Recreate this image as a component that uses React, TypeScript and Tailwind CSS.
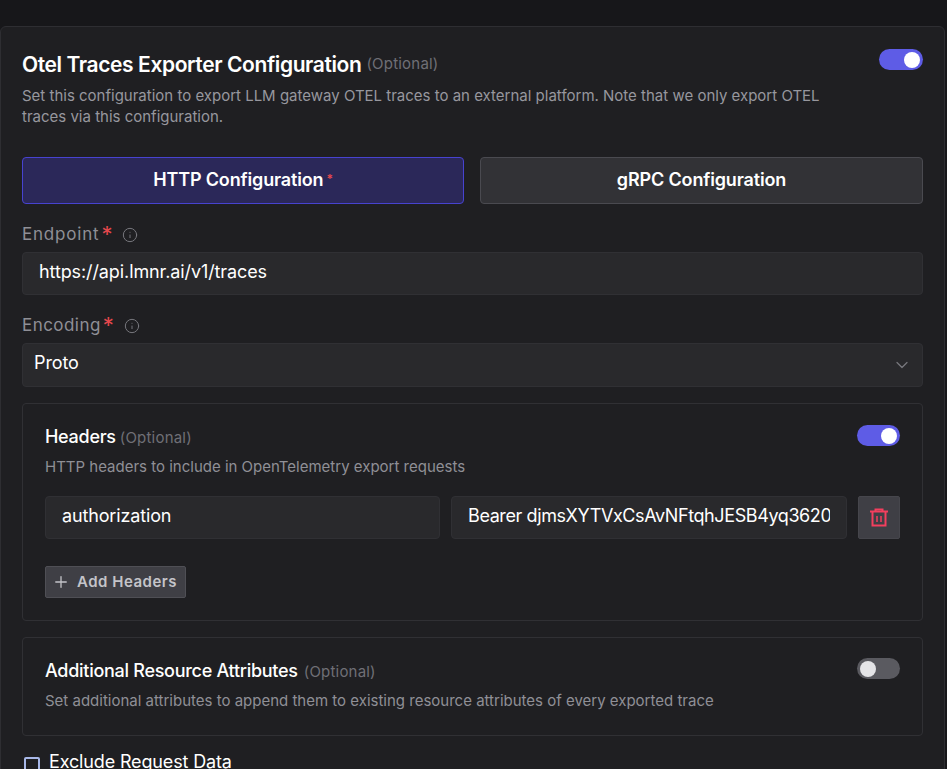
import { Plus, ChevronDown, Info } from 'lucide-react';

function Toggle({ on, wide }: { on: boolean; wide?: boolean }) {
  return (
    <div
      className={`flex h-[21px] shrink-0 items-center rounded-full px-[3px] ${wide ? 'w-[44px]' : 'w-[43px]'} ${
        on ? 'justify-end bg-[#5e5ce6]' : 'justify-start bg-[#5a5a60]'
      }`}
    >
      <div className={`h-[16px] w-[16px] rounded-full ${on ? 'bg-white' : 'bg-[#e4e4e7]'}`} />
    </div>
  );
}

function FieldLabel({ text, narrow }: { text: string; narrow?: boolean }) {
  return (
    <div className="flex h-[18px] items-center pt-[2px]">
      <span className={`text-[17px] text-[#8f8f96] ${narrow ? 'tracking-[0.45px]' : 'tracking-[0.8px]'}`}>{text}</span>
      <span className="-mt-[2px] ml-[2px] text-[22px] leading-[18px] text-[#e5484d]">*</span>
      <Info size={16} strokeWidth={1.5} className="ml-[10px] text-[#77777d]" />
    </div>
  );
}

function TrashIcon() {
  return (
    <svg width="20" height="20" viewBox="0 0 20 20" fill="none" stroke="#f43f5e" strokeWidth="2">
      <path d="M1 3.5h18" />
      <path d="M6.5 3V1.5h7V3" />
      <path d="M3.5 4v13.5h13V4" />
      <path d="M8 8v6M12 8v6" strokeWidth="1.5" />
    </svg>
  );
}

export default function App() {
  return (
    <div className="h-[769px] w-[947px] overflow-hidden bg-[#17171a] pt-[26px] font-['Inter',sans-serif]">
      <div className="mr-[2px] rounded-[6px] border border-[#2e2e32] bg-[#1f1f22] px-[21px] pt-[23px]">
        <div className="-mt-px flex items-start justify-between">
          <div className="w-[820px]">
            <div className="mt-px flex items-baseline">
              <h2 className="text-[21px] leading-[30px] font-semibold tracking-[-0.4px] text-white">
                Otel Traces Exporter Configuration
              </h2>
              <span className="ml-[5px] -translate-y-[3px] text-[15px] tracking-[0.2px] text-[#6f6f76]">(Optional)</span>
            </div>
            <p className="mt-[5px] text-[15px] leading-[21px] text-[#97979e]">
              Set this configuration to export LLM gateway OTEL traces to an external platform. Note that we only export
              OTEL
              <br />
              traces via this configuration.
            </p>
          </div>
          <Toggle on wide />
        </div>

        <div className="mt-[30px] grid grid-cols-[442px_443px] gap-[16px]">
          <button className="flex h-[47px] items-center justify-center rounded-[4px] border border-[#4743d0] bg-[#2b2859] pb-[2px] text-[18px] font-semibold tracking-[-0.15px] text-white">
            HTTP Configuration<span className="mb-[2px] ml-[3px] text-[12px] text-[#e5484d]">*</span>
          </button>
          <button className="flex h-[47px] items-center justify-center rounded-[4px] border border-[#4a4a50] bg-[#323236] pb-[2px] text-[18px] font-semibold tracking-[-0.15px] text-white">
            gRPC Configuration
          </button>
        </div>

        <div className="mt-[21px]">
          <FieldLabel text="Endpoint" />
          <div className="mt-[9px] flex h-[43px] items-center rounded-[4px] border border-[#303034] bg-[#29292c] px-[16px] pb-[4px] text-[18px] tracking-[-0.1px] text-white">
            https://api.lmnr.ai/v1/traces
          </div>
        </div>

        <div className="mt-[21px]">
          <FieldLabel text="Encoding" narrow />
          <div className="mt-[9px] flex h-[44px] items-center justify-between rounded-[4px] border border-[#303034] bg-[#29292c] pr-[10px] pl-[11px] text-[18px] tracking-[-0.1px] text-white">
            <span className="pb-[5px]">Proto</span>
            <ChevronDown size={20} strokeWidth={1.5} className="text-[#77777d]" />
          </div>
        </div>

        <section className="mt-[16px] h-[218px] rounded-[4px] border border-[#303034] px-[22px] pt-[20px]">
          <div className="flex items-start justify-between">
            <div className="flex items-baseline">
              <h3 className="text-[18px] leading-[26px] font-medium tracking-[-0.28px] text-white">Headers</h3>
              <span className="ml-[4px] text-[15px] tracking-[0.2px] text-[#6f6f76]">(Optional)</span>
            </div>
            <div className="mt-[1px]">
              <Toggle on />
            </div>
          </div>
          <p className="mt-[6px] text-[15px] leading-[21px] text-[#8f8f96]">
            HTTP headers to include in OpenTelemetry export requests
          </p>
          <div className="mt-[19px] flex gap-[11px]">
            <div className="flex h-[43px] w-[395px] items-center rounded-[4px] border border-[#303034] bg-[#29292c] px-[16px] pb-[4px] text-[18px] tracking-[-0.15px] text-white">
              authorization
            </div>
            <div className="flex h-[43px] w-[396px] items-center rounded-[4px] border border-[#303034] bg-[#29292c] px-[16px] pb-[4px] text-[18px] tracking-[-0.4px] text-white">
              <input
                readOnly
                value="Bearer djmsXYTVxCsAvNFtqhJESB4yq3620"
                className="w-full bg-transparent outline-none"
              />
            </div>
            <button className="flex h-[43px] w-[42px] items-center justify-center rounded-[2px] border border-[#46464c] bg-[#3f3f45]">
              <TrashIcon />
            </button>
          </div>
          <button className="mt-[27px] flex h-[32px] w-[141px] items-center justify-center gap-[7px] rounded-[2px] border border-[#4f4f55] bg-[#3f3f45] pr-[2px] text-[15px] font-semibold tracking-[0.5px] text-[#c4c4c9]">
            <Plus size={18} strokeWidth={1.75} />
            Add Headers
          </button>
        </section>

        <section className="mt-[16px] h-[99px] rounded-[4px] border border-[#303034] px-[22px] pt-[20px]">
          <div className="flex items-start justify-between">
            <div className="flex items-baseline">
              <h3 className="text-[18px] leading-[26px] font-medium tracking-[-0.28px] text-white">
                Additional Resource Attributes
              </h3>
              <span className="ml-[6px] text-[15px] tracking-[0.2px] text-[#6f6f76]">(Optional)</span>
            </div>
            <div className="mt-[0px]">
              <Toggle on={false} />
            </div>
          </div>
          <p className="mt-[6px] text-[15px] leading-[21px] text-[#8f8f96]">
            Set additional attributes to append them to existing resource attributes of every exported trace
          </p>
        </section>

        <div className="mt-[14px] ml-[2px] flex items-center gap-[9px] pb-[20px]">
          <div className="mt-[5px] h-[16px] w-[16px] rounded-[2px] border-2 border-[#a8b8e8]" />
          <span className="text-[18px] leading-[24px] tracking-[-0.15px] text-white">Exclude Request Data</span>
        </div>
      </div>
    </div>
  );
}
